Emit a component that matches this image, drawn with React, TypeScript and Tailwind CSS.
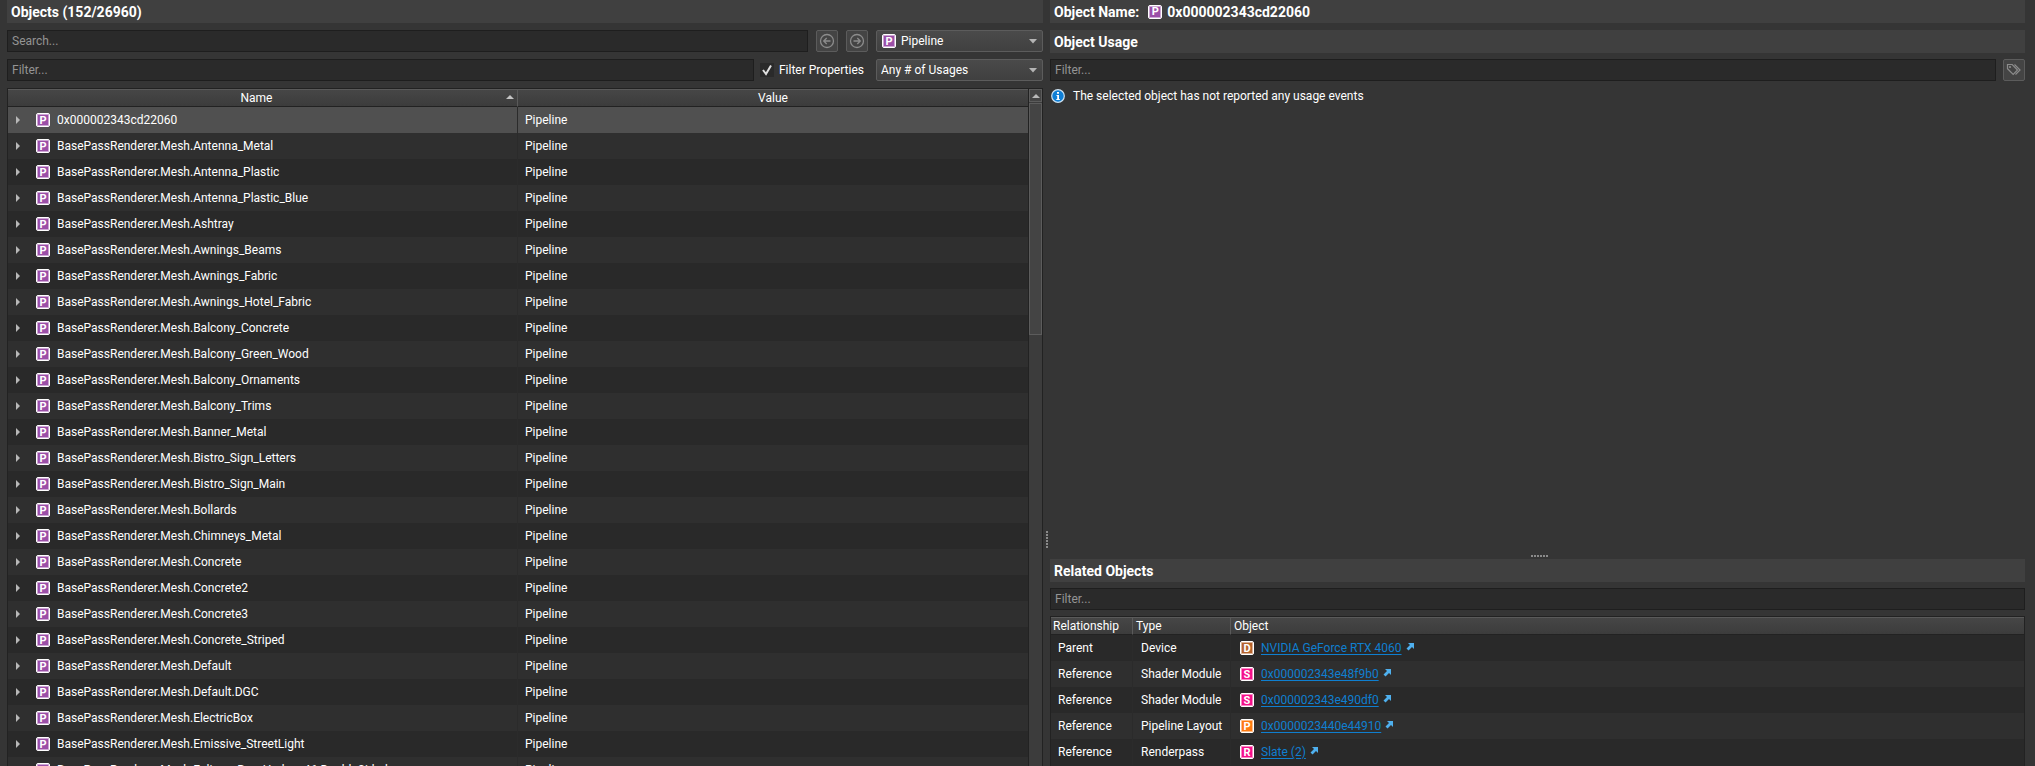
import { ReactNode } from "react";

const names = [
  "0x000002343cd22060",
  "BasePassRenderer.Mesh.Antenna_Metal",
  "BasePassRenderer.Mesh.Antenna_Plastic",
  "BasePassRenderer.Mesh.Antenna_Plastic_Blue",
  "BasePassRenderer.Mesh.Ashtray",
  "BasePassRenderer.Mesh.Awnings_Beams",
  "BasePassRenderer.Mesh.Awnings_Fabric",
  "BasePassRenderer.Mesh.Awnings_Hotel_Fabric",
  "BasePassRenderer.Mesh.Balcony_Concrete",
  "BasePassRenderer.Mesh.Balcony_Green_Wood",
  "BasePassRenderer.Mesh.Balcony_Ornaments",
  "BasePassRenderer.Mesh.Balcony_Trims",
  "BasePassRenderer.Mesh.Banner_Metal",
  "BasePassRenderer.Mesh.Bistro_Sign_Letters",
  "BasePassRenderer.Mesh.Bistro_Sign_Main",
  "BasePassRenderer.Mesh.Bollards",
  "BasePassRenderer.Mesh.Chimneys_Metal",
  "BasePassRenderer.Mesh.Concrete",
  "BasePassRenderer.Mesh.Concrete2",
  "BasePassRenderer.Mesh.Concrete3",
  "BasePassRenderer.Mesh.Concrete_Striped",
  "BasePassRenderer.Mesh.Default",
  "BasePassRenderer.Mesh.Default.DGC",
  "BasePassRenderer.Mesh.ElectricBox",
  "BasePassRenderer.Mesh.Emissive_StreetLight",
  "BasePassRenderer.Mesh.Foliage_Bux_Hedges46.DoubleSided",
];

const related = [
  { relationship: "Parent", type: "Device", letter: "D", color: "bg-[#b5632c]", object: "NVIDIA GeForce RTX 4060" },
  { relationship: "Reference", type: "Shader Module", letter: "S", color: "bg-[#f5108a]", object: "0x000002343e48f9b0" },
  { relationship: "Reference", type: "Shader Module", letter: "S", color: "bg-[#f5108a]", object: "0x000002343e490df0" },
  { relationship: "Reference", type: "Pipeline Layout", letter: "P", color: "bg-[#ff7a10]", object: "0x0000023440e44910" },
  { relationship: "Reference", type: "Renderpass", letter: "R", color: "bg-[#f5108a]", object: "Slate (2)" },
];

function Badge({ letter = "P", color = "bg-[#9b4fa8]" }: { letter?: string; color?: string }) {
  return (
    <span className={`flex size-3.5 shrink-0 items-center justify-center rounded-xs border border-white text-[11px] leading-none font-bold text-white inset-ring inset-ring-white/50 ${color}`}>
      {letter}
    </span>
  );
}

function PanelTitle({ children }: { children: ReactNode }) {
  return (
    <h2 className="flex h-[23px] shrink-0 items-center bg-[#404040] px-1 text-[14px] font-bold text-white">{children}</h2>
  );
}

function TextField({ label, placeholder }: { label: string; placeholder: string }) {
  return (
    <input
      type="text"
      aria-label={label}
      placeholder={placeholder}
      className="h-[22px] min-w-0 flex-1 border border-[#1e1e1e] bg-[#2a2a2a] px-1 text-white outline-none placeholder:text-[#949494]"
    />
  );
}

function IconButton({ label, children }: { label: string; children: ReactNode }) {
  return (
    <button
      type="button"
      aria-label={label}
      className="flex size-[22px] shrink-0 items-center justify-center rounded-xs border border-[#5c5c5c] bg-[#444444] text-[#8c8c8c]"
    >
      {children}
    </button>
  );
}

function DropDown({ label, value, icon }: { label: string; value: string; icon?: ReactNode }) {
  return (
    <div className="relative h-[22px] w-[167px] shrink-0">
      <select
        aria-label={label}
        defaultValue={value}
        className={`size-full appearance-none rounded-xs border border-[#5c5c5c] bg-linear-to-b from-[#4a4a4a] to-[#404040] text-white outline-none ${icon ? "pl-[24px]" : "pl-1"}`}
      >
        <option>{value}</option>
      </select>
      {icon && <span className="pointer-events-none absolute top-1 left-[6px]">{icon}</span>}
      <svg className="pointer-events-none absolute top-[9px] right-[6px]" width="8" height="5" viewBox="0 0 8 5">
        <path d="M0 0h8L4 4.5z" fill="#b4b4b4" />
      </svg>
    </div>
  );
}

const headCell = "border-t border-b border-t-[#5a5a5a] border-b-[#222222] bg-linear-to-b from-[#464646] to-[#3c3c3c] font-normal";

export default function App() {
  return (
    <main className="flex h-screen overflow-hidden bg-[#353535] pr-2.5 pl-[7px] font-[Roboto,sans-serif] text-[12px] leading-4 text-white">
      <section aria-label="Objects" className="flex min-w-0 flex-[1036] flex-col">
        <PanelTitle>Objects (152/26960)</PanelTitle>
        <div className="mt-[7px] flex shrink-0 gap-2">
          <TextField label="Search objects" placeholder="Search..." />
          <IconButton label="Back">
            <svg width="16" height="16" viewBox="0 0 16 16" fill="none" stroke="currentColor" strokeWidth="1.3">
              <circle cx="8" cy="8" r="6.5" />
              <path d="M11.500 8H4.800M7.700 5L4.700 8l3 3" />
            </svg>
          </IconButton>
          <IconButton label="Forward">
            <svg width="16" height="16" viewBox="0 0 16 16" fill="none" stroke="currentColor" strokeWidth="1.3">
              <circle cx="8" cy="8" r="6.5" />
              <path d="M4.500 8h6.700M8.300 5l3 3-3 3" />
            </svg>
          </IconButton>
          <DropDown label="Object type" value="Pipeline" icon={<Badge />} />
        </div>
        <div className="mt-[7px] flex shrink-0">
          <TextField label="Filter objects" placeholder="Filter..." />
          <label className="mr-3 ml-1.5 flex items-center gap-[5px]">
            <span className="relative flex size-3.5">
              <input type="checkbox" defaultChecked className="peer size-3.5 appearance-none bg-[#2a2a2a]" />
              <svg className="pointer-events-none invisible absolute inset-0 peer-checked:visible" width="14" height="14" viewBox="0 0 14 14" fill="none" stroke="#e0e0e0" strokeWidth="2">
                <path d="M3 7l3 4 5-8.5" />
              </svg>
            </span>
            Filter Properties
          </label>
          <DropDown label="Usages" value="Any # of Usages" />
        </div>
        <div className="mt-[7px] flex min-h-0 flex-1 border border-b-0 border-[#222222]">
          <div className="min-w-0 flex-1 overflow-hidden">
            <table className="w-full table-fixed border-separate border-spacing-0">
              <thead>
                <tr className="h-[18px]">
                  <th className={`${headCell} border-r border-r-[#5a5a5a] p-0`}>
                    <span className="relative block pr-3">
                      Name
                      <svg className="absolute top-[5px] right-[3px]" width="8" height="4" viewBox="0 0 8 4">
                        <path d="M0 4h8L4 0z" fill="#c4c4c4" />
                      </svg>
                    </span>
                  </th>
                  <th className={`${headCell} p-0`}>Value</th>
                </tr>
              </thead>
              <tbody>
                {names.map((name, i) => (
                  <tr key={name} className={i === 0 ? "h-[26px] bg-[#505050]" : "h-[26px] odd:bg-[#292929] even:bg-[#2f2f2f]"}>
                    <td className="border-r border-[#2b2b2b] p-0">
                      <span className="flex items-center pl-2">
                        <svg width="4" height="8" viewBox="0 0 4 8" className="mr-4 shrink-0">
                          <path d="M0 0v8l4-4z" fill="#b8b8b8" />
                        </svg>
                        <Badge />
                        <span className="ml-[7px] whitespace-nowrap">{name}</span>
                      </span>
                    </td>
                    <td className="p-0 pl-[7px]">Pipeline</td>
                  </tr>
                ))}
              </tbody>
            </table>
          </div>
          <div className="flex w-3.5 shrink-0 flex-col border-l border-[#222222] bg-[#3c3c3c]">
            <button type="button" aria-label="Scroll up" className="flex h-[13px] shrink-0 items-center justify-center border border-[#5c5c5c] bg-[#444444]">
              <svg width="8" height="4" viewBox="0 0 8 4">
                <path d="M0 4h8L4 0z" fill="#b8b8b8" />
              </svg>
            </button>
            <div className="mt-px h-[232px] border border-[#5c5c5c] bg-[#444444]" />
          </div>
        </div>
      </section>

      <div className="flex w-[7px] shrink-0 flex-col items-center pt-[531px]">
        <span className="h-[17px] w-0.5 bg-[repeating-linear-gradient(to_bottom,#8a8a8a_0_2px,transparent_2px_3px)]" />
      </div>

      <section aria-label="Object details" className="flex min-w-0 flex-[975] flex-col">
        <PanelTitle>
          Object Name:
          <span className="mr-[5px] ml-[9px]">
            <Badge />
          </span>
          0x000002343cd22060
        </PanelTitle>
        <div className="mt-[7px] flex flex-col">
          <PanelTitle>Object Usage</PanelTitle>
        </div>
        <div className="mt-1.5 flex shrink-0 gap-[7px]">
          <TextField label="Filter usage" placeholder="Filter..." />
          <IconButton label="Tags">
            <svg width="16" height="16" viewBox="0 0 16 16" fill="none" stroke="currentColor" strokeWidth="1.2">
              <path d="M1.500 2.500v4.200l5.700 5.800 4.300-4.500-5.300-5.500z" />
              <path d="M8.500 2.500l5.500 5.500-4.500 4.500" />
              <circle cx="4" cy="5" r=".5" />
            </svg>
          </IconButton>
        </div>
        <p className="mt-[7px] flex items-center gap-2 pl-px">
          <svg width="14" height="14" viewBox="0 0 14 14">
            <circle cx="7" cy="7" r="6.3" fill="#0f7fd6" stroke="#cfe3f2" strokeWidth="1.2" />
            <path d="M6 3h2v1.700H6zM5.500 6H8v4h.8v1H5.300v-1h.9V7h-.7z" fill="#fff" />
          </svg>
          The selected object has not reported any usage events
        </p>
        <div className="flex min-h-0 flex-1 flex-col items-center justify-end pb-0.5 pl-1">
          <span className="h-0.5 w-[17px] bg-[repeating-linear-gradient(to_right,#8a8a8a_0_2px,transparent_2px_3px)]" />
        </div>
        <div className="flex h-[207px] shrink-0 flex-col overflow-hidden">
          <PanelTitle>Related Objects</PanelTitle>
          <div className="mt-1.5 flex shrink-0">
            <TextField label="Filter related objects" placeholder="Filter..." />
          </div>
          <div className="mt-1.5 flex-1 border border-b-0 border-[#222222] bg-[#292929]">
            <table className="w-full table-fixed border-separate border-spacing-0">
              <colgroup>
                <col className="w-[82px]" />
                <col className="w-[98px]" />
                <col />
              </colgroup>
              <thead>
                <tr className="h-[18px] text-left">
                  <th className={`${headCell} border-r border-r-[#5a5a5a] p-0 pl-0.5`}>Relationship</th>
                  <th className={`${headCell} border-r border-r-[#5a5a5a] p-0 pl-[3px]`}>Type</th>
                  <th className={`${headCell} p-0 pl-[3px]`}>Object</th>
                </tr>
              </thead>
              <tbody>
                {related.map((row) => (
                  <tr key={row.object} className="h-[26px] odd:bg-[#292929] even:bg-[#2f2f2f]">
                    <td className="border-r border-[#2b2b2b] p-0 pl-[7px]">{row.relationship}</td>
                    <td className="border-r border-[#2b2b2b] p-0 pl-2 whitespace-nowrap">{row.type}</td>
                    <td className="p-0 pl-[9px]">
                      <span className="flex items-center">
                        <Badge letter={row.letter} color={row.color} />
                        <a href="#" className="ml-[7px] text-[#0f7fd0] underline underline-offset-2">
                          {row.object}
                        </a>
                        <svg width="8" height="8" viewBox="0 0 8 8" className="mb-0.5 ml-1">
                          <path d="M2 0h6v6L6 4 2.500 7.500.5 5.500 4 2z" fill="#4fb0ee" />
                        </svg>
                      </span>
                    </td>
                  </tr>
                ))}
              </tbody>
            </table>
          </div>
        </div>
      </section>
    </main>
  );
}
